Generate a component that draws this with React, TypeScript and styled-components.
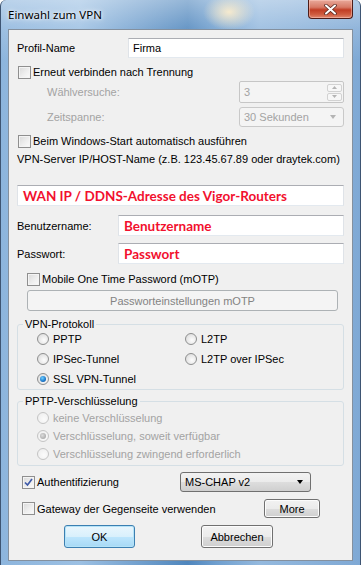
import React from "react"
import styled, { createGlobalStyle, css } from "styled-components"

const GlobalStyle = createGlobalStyle`
    html, body {
        margin: 0;
        padding: 0;
        background: #ffffff;
    }
    body {
        font-family: "Liberation Sans", Arial, sans-serif;
        font-size: 11px;
        color: #000;
    }
`

const Window = styled.div`
    width: 361px;
    height: 565px;
    box-sizing: border-box;
    display: flex;
    flex-direction: column;
    border-left: 1px solid #3e5573;
    border-right: 1px solid #3e5573;
    border-radius: 6px 6px 0 0;
    overflow: hidden;
    background:
        radial-gradient(ellipse 26px 18px at 228px 12px, rgba(250, 236, 205, 0.95), rgba(250, 236, 205, 0) 100%),
        linear-gradient(180deg, rgba(255, 255, 255, 0.4), rgba(255, 255, 255, 0.15) 28px, rgba(255, 255, 255, 0) 60px),
        linear-gradient(90deg, #8db5dd 0%, #9cc0e3 22%, #6e9dcc 40%, #4f86bd 52%, #6f9fcf 60%, #94b9de 72%, #7fa9d5 100%);
`

const TitleBar = styled.div`
    height: 29px;
    flex: none;
    display: flex;
    align-items: flex-start;
    padding-left: 7px;
`

const Title = styled.div`
    font-family: "Noto Sans", "Open Sans", sans-serif;
    font-size: 11.5px;
    line-height: 12px;
    margin-top: 9px;
    color: #000;
    text-shadow: 0 0 6px rgba(255, 255, 255, 0.95), 0 0 3px rgba(255, 255, 255, 0.9);
`

const CloseButton = styled.div`
    margin-left: auto;
    margin-right: 7px;
    width: 45px;
    height: 19px;
    box-sizing: border-box;
    border: 1px solid #4d1c18;
    border-top: none;
    border-radius: 0 0 4px 4px;
    background: linear-gradient(180deg, #e9a99a 0%, #d77a66 40%, #c13d24 55%, #cf5c3f 80%, #e08870 100%);
    display: flex;
    align-items: center;
    justify-content: center;
    box-shadow: inset 0 0 0 1px rgba(255, 210, 200, 0.45);
`

const Client = styled.div`
    flex: 1;
    margin: 0 7px 4px 7px;
    border: 1px solid #84909e;
    background: #f0f0f0;
    padding: 0 8px 0 8px;
    display: flex;
    flex-direction: column;
`

const Row = styled.div<{ $h: number; $mt: number }>`
    display: flex;
    align-items: center;
    height: ${(p) => p.$h}px;
    margin-top: ${(p) => p.$mt}px;
    flex: none;
`

const Label = styled.span<{ $indent?: number; $muted?: boolean }>`
    margin-left: ${(p) => p.$indent ?? 0}px;
    color: ${(p) => (p.$muted ? "#a3a3a3" : "#000")};
    white-space: nowrap;
`

const TextBox = styled.div<{ $w?: number; $red?: boolean }>`
    margin-left: auto;
    width: ${(p) => (p.$w ? `${p.$w}px` : "100%")};
    height: 100%;
    box-sizing: border-box;
    background: #fff;
    border: 1px solid #dfe3e8;
    border-top-color: #abadb3;
    border-bottom-color: #e3e9ef;
    display: flex;
    align-items: center;
    padding-left: ${(p) => (p.$red ? 5 : 4)}px;
    ${(p) =>
        p.$red &&
        css`
            color: #f2102e;
            font-family: Lato, "Open Sans", sans-serif;
            font-weight: 700;
            font-size: 13.5px;
        `}
`

const CheckBox = styled.span<{ $indent?: number }>`
    flex: none;
    width: 13px;
    height: 13px;
    box-sizing: border-box;
    margin-left: ${(p) => p.$indent ?? 0}px;
    margin-right: 2px;
    border: 1px solid #8f8f8f;
    background: linear-gradient(135deg, #d9d9d9 0%, #eeeeee 55%, #fbfbfb 100%);
    box-shadow: inset 0 0 0 1px #f4f4f4;
    display: flex;
    align-items: center;
    justify-content: center;
`

const Check = () => (
    <svg width="9" height="9" viewBox="0 0 9 9">
        <path d="M1 4.5 L3.5 7 L8 1" fill="none" stroke="#3e5aa8" strokeWidth="1.7" />
    </svg>
)

const Spin = styled.div`
    margin-left: auto;
    width: 105px;
    height: 100%;
    box-sizing: border-box;
    border: 1px solid #c6c6c6;
    border-radius: 2px;
    background: #f4f4f4;
    display: flex;
    align-items: center;
    padding-left: 4px;
    color: #a3a3a3;
`

const SpinButtons = styled.div`
    margin-left: auto;
    margin-right: 1px;
    display: flex;
    flex-direction: column;
    gap: 1px;
`

const SpinBtn = styled.div`
    width: 15px;
    height: 8px;
    box-sizing: border-box;
    border: 1px solid #d2d2d2;
    border-radius: 2px;
    background: #f7f7f7;
    display: flex;
    align-items: center;
    justify-content: center;
`

const Combo = styled.div<{ $w: number; $active?: boolean; $mr?: number }>`
    margin-left: auto;
    margin-right: ${(p) => p.$mr ?? 0}px;
    width: ${(p) => p.$w}px;
    height: 100%;
    box-sizing: border-box;
    border-radius: 3px;
    display: flex;
    align-items: center;
    padding: 0 7px 0 4px;
    ${(p) =>
        p.$active
            ? css`
                  border: 1px solid #707070;
                  background: linear-gradient(180deg, #f2f2f2 0%, #ebebeb 50%, #dddddd 51%, #cfcfcf 100%);
                  color: #000;
              `
            : css`
                  border: 1px solid #c9c9c9;
                  background: #f4f4f4;
                  color: #a3a3a3;
              `}
`

const Arrow = styled.span<{ $color: string }>`
    margin-left: auto;
    width: 0;
    height: 0;
    border-left: 3.5px solid transparent;
    border-right: 3.5px solid transparent;
    border-top: 4px solid ${(p) => p.$color};
`

const Button = styled.div<{ $w: number; $ml?: number; $mr?: number; $auto?: boolean; $primary?: boolean; $disabled?: boolean }>`
    width: ${(p) => p.$w}px;
    height: 100%;
    margin-left: ${(p) => (p.$auto ? "auto" : `${p.$ml ?? 0}px`)};
    margin-right: ${(p) => p.$mr ?? 0}px;
    box-sizing: border-box;
    border-radius: 3px;
    display: flex;
    align-items: center;
    justify-content: center;
    flex: none;
    ${(p) =>
        p.$disabled
            ? css`
                  border: 1px solid #adb2b5;
                  background: #f4f4f4;
                  color: #838383;
              `
            : p.$primary
            ? css`
                  border: 1px solid #3c7fb1;
                  background: linear-gradient(180deg, #eaf6fd 0%, #d9f0fc 50%, #bee6fd 51%, #a7d9f5 100%);
                  box-shadow: inset 0 0 0 1px #b5e3f8;
              `
            : css`
                  border: 1px solid #707070;
                  background: linear-gradient(180deg, #f2f2f2 0%, #ebebeb 50%, #dddddd 51%, #cfcfcf 100%);
                  box-shadow: inset 0 0 0 1px #fcfcfc;
              `}
`

const Group = styled.fieldset<{ $mt: number }>`
    margin: ${(p) => p.$mt}px 0 0 0;
    padding: 0;
    border: 1px solid #d5dfe5;
    border-radius: 3px;
    flex: none;
    min-width: 0;
`

const Legend = styled.legend`
    margin-left: 5px;
    padding: 0 2px;
    line-height: 14px;
`

const RadioGrid = styled.div<{ $cols: number; $gap: number; $pt: number; $pb: number }>`
    display: grid;
    grid-template-columns: ${(p) => (p.$cols === 2 ? "148px 1fr" : "1fr")};
    grid-auto-rows: 16px;
    row-gap: ${(p) => p.$gap}px;
    padding: ${(p) => p.$pt}px 0 ${(p) => p.$pb}px 19px;
`

const RadioItem = styled.div<{ $muted?: boolean }>`
    display: flex;
    align-items: center;
    gap: 4px;
    color: ${(p) => (p.$muted ? "#a3a3a3" : "#000")};
    white-space: nowrap;
`

const RadioCircle = styled.span<{ $on?: boolean; $muted?: boolean }>`
    flex: none;
    width: 12px;
    height: 12px;
    box-sizing: border-box;
    border-radius: 50%;
    border: 1px solid ${(p) => (p.$muted ? "#c4c4c4" : "#8e8f8f")};
    background: ${(p) =>
        p.$muted
            ? "radial-gradient(circle at 60% 60%, #fbfbfb, #ececec)"
            : "radial-gradient(circle at 60% 60%, #fdfdfd, #d6d6d6)"};
    display: flex;
    align-items: center;
    justify-content: center;
    &::after {
        content: "";
        display: ${(p) => (p.$on ? "block" : "none")};
        width: 6px;
        height: 6px;
        border-radius: 50%;
        background: ${(p) =>
            p.$muted
                ? "radial-gradient(circle at 40% 40%, #dcdcdc, #9a9a9a)"
                : "radial-gradient(circle at 40% 35%, #6fd0ff, #1a76c9 60%, #0b3f82)"};
    }
`

function Radio({ label, on, muted }: { label: string; on?: boolean; muted?: boolean }) {
    return (
        <RadioItem $muted={muted}>
            <RadioCircle $on={on} $muted={muted} />
            {label}
        </RadioItem>
    )
}

function CheckRow({
    label,
    indent,
    checked,
    h,
    mt,
    children,
}: {
    label: string
    indent?: number
    checked?: boolean
    h: number
    mt: number
    children?: React.ReactNode
}) {
    return (
        <Row $h={h} $mt={mt}>
            <CheckBox $indent={indent}>{checked && <Check />}</CheckBox>
            <Label>{label}</Label>
            {children}
        </Row>
    )
}

const SmallTri = ({ up }: { up?: boolean }) => (
    <svg width="5" height="3" viewBox="0 0 5 3">
        <path d={up ? "M0 3 L2.5 0 L5 3 Z" : "M0 0 L2.5 3 L5 0 Z"} fill="#b4b4b4" />
    </svg>
)

export default function App() {
    return (
        <>
            <GlobalStyle />
            <Window>
                <TitleBar>
                    <Title>Einwahl zum VPN</Title>
                    <CloseButton>
                        <svg width="13" height="11" viewBox="0 0 13 11">
                            <path d="M2 1.5 L11 9.5 M11 1.5 L2 9.5" stroke="#5a2a22" strokeWidth="3.6" strokeLinecap="round" />
                            <path d="M2 1.5 L11 9.5 M11 1.5 L2 9.5" stroke="#ffffff" strokeWidth="2" strokeLinecap="round" />
                        </svg>
                    </CloseButton>
                </TitleBar>
                <Client>
                    <Row $h={20} $mt={8}>
                        <Label>Profil-Name</Label>
                        <TextBox $w={216}>Firma</TextBox>
                    </Row>
                    <CheckRow label="Erneut verbinden nach Trennung" indent={1} h={14} mt={7} />
                    <Row $h={22} $mt={2}>
                        <Label $indent={30} $muted>
                            Wählversuche:
                        </Label>
                        <Spin>
                            3
                            <SpinButtons>
                                <SpinBtn>
                                    <SmallTri up />
                                </SpinBtn>
                                <SpinBtn>
                                    <SmallTri />
                                </SpinBtn>
                            </SpinButtons>
                        </Spin>
                    </Row>
                    <Row $h={20} $mt={4}>
                        <Label $indent={30} $muted>
                            Zeitspanne:
                        </Label>
                        <Combo $w={105}>
                            30 Sekunden
                            <Arrow $color="#b4b4b4" />
                        </Combo>
                    </Row>
                    <CheckRow label="Beim Windows-Start automatisch ausführen" indent={1} h={14} mt={7} />
                    <Row $h={14} $mt={4}>
                        <Label>VPN-Server IP/HOST-Name (z.B. 123.45.67.89 oder draytek.com)</Label>
                    </Row>
                    <Row $h={21} $mt={19}>
                        <TextBox $red>WAN IP / DDNS-Adresse des Vigor-Routers</TextBox>
                    </Row>
                    <Row $h={21} $mt={9}>
                        <Label>Benutzername:</Label>
                        <TextBox $w={226} $red>
                            Benutzername
                        </TextBox>
                    </Row>
                    <Row $h={21} $mt={7}>
                        <Label>Passwort:</Label>
                        <TextBox $w={226} $red>
                            Passwort
                        </TextBox>
                    </Row>
                    <CheckRow label="Mobile One Time Password (mOTP)" indent={10} h={14} mt={8} />
                    <Row $h={21} $mt={4}>
                        <Button $w={311} $ml={10} $disabled>
                            Passworteinstellungen mOTP
                        </Button>
                    </Row>
                    <Group $mt={6}>
                        <Legend>VPN-Protokoll</Legend>
                        <RadioGrid $cols={2} $gap={4} $pt={0} $pb={2}>
                            <Radio label="PPTP" />
                            <Radio label="L2TP" />
                            <Radio label="IPSec-Tunnel" />
                            <Radio label="L2TP over IPSec" />
                            <Radio label="SSL VPN-Tunnel" on />
                        </RadioGrid>
                    </Group>
                    <Group $mt={4}>
                        <Legend>PPTP-Verschlüsselung</Legend>
                        <RadioGrid $cols={1} $gap={2} $pt={2} $pb={3}>
                            <Radio label="keine Verschlüsselung" muted />
                            <Radio label="Verschlüsselung, soweit verfügbar" muted on />
                            <Radio label="Verschlüsselung zwingend erforderlich" muted />
                        </RadioGrid>
                    </Group>
                    <CheckRow label="Authentifizierung" indent={5} checked h={20} mt={6}>
                        <Combo $w={131} $active $mr={33}>
                            MS-CHAP v2
                            <Arrow $color="#000" />
                        </Combo>
                    </CheckRow>
                    <CheckRow label="Gateway der Gegenseite verwenden" indent={5} h={19} mt={7}>
                        <Button $w={56} $auto $mr={24}>
                            More
                        </Button>
                    </CheckRow>
                    <Row $h={23} $mt={7}>
                        <Button $w={71} $ml={47} $primary>
                            OK
                        </Button>
                        <Button $w={72} $ml={66}>
                            Abbrechen
                        </Button>
                    </Row>
                </Client>
            </Window>
        </>
    )
}
